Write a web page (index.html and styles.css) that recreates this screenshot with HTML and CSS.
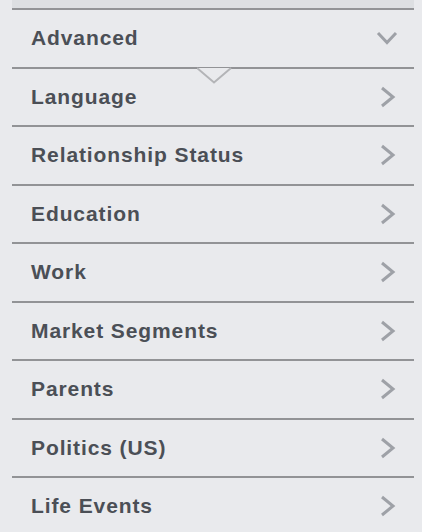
FILE: index.html
```html
<!DOCTYPE html>
<html>
<head>
<meta charset="utf-8">
<link rel="stylesheet" href="styles.css">
</head>
<body>
<div class="panel">
  <div class="topband"></div>
  <div class="row open">
    <span class="label">Advanced</span>
    <svg class="chev-down" width="22" height="16" viewBox="0 0 22 16"><path d="M2 3 L11 12.5 L20 3" fill="none" stroke="#9ea1a7" stroke-width="3"/></svg>
    <svg class="notch" width="36" height="17" viewBox="0 0 36 17"><path d="M0 1 L17 15.5 L34 1" fill="#e9eaed" stroke="#b3b4b7" stroke-width="2"/></svg>
  </div>
  <div class="row"><span class="label">Language</span><svg class="chev" width="18" height="22" viewBox="0 0 18 22"><path d="M3 2 L14 11 L3 20" fill="none" stroke="#9ea1a7" stroke-width="3"/></svg></div>
  <div class="row"><span class="label">Relationship Status</span><svg class="chev" width="18" height="22" viewBox="0 0 18 22"><path d="M3 2 L14 11 L3 20" fill="none" stroke="#9ea1a7" stroke-width="3"/></svg></div>
  <div class="row"><span class="label">Education</span><svg class="chev" width="18" height="22" viewBox="0 0 18 22"><path d="M3 2 L14 11 L3 20" fill="none" stroke="#9ea1a7" stroke-width="3"/></svg></div>
  <div class="row"><span class="label">Work</span><svg class="chev" width="18" height="22" viewBox="0 0 18 22"><path d="M3 2 L14 11 L3 20" fill="none" stroke="#9ea1a7" stroke-width="3"/></svg></div>
  <div class="row"><span class="label">Market Segments</span><svg class="chev" width="18" height="22" viewBox="0 0 18 22"><path d="M3 2 L14 11 L3 20" fill="none" stroke="#9ea1a7" stroke-width="3"/></svg></div>
  <div class="row"><span class="label">Parents</span><svg class="chev" width="18" height="22" viewBox="0 0 18 22"><path d="M3 2 L14 11 L3 20" fill="none" stroke="#9ea1a7" stroke-width="3"/></svg></div>
  <div class="row"><span class="label">Politics (US)</span><svg class="chev" width="18" height="22" viewBox="0 0 18 22"><path d="M3 2 L14 11 L3 20" fill="none" stroke="#9ea1a7" stroke-width="3"/></svg></div>
  <div class="row"><span class="label">Life Events</span><svg class="chev" width="18" height="22" viewBox="0 0 18 22"><path d="M3 2 L14 11 L3 20" fill="none" stroke="#9ea1a7" stroke-width="3"/></svg></div>
</div>
</body>
</html>
```
FILE: styles.css
```css
html, body {
  margin: 0;
  padding: 0;
  background: #e9eaed;
  overflow: hidden;
}
.panel {
  margin-left: 12px;
  width: 402px;
  height: 532px;
}
.topband {
  height: 8px;
  background: #dddfe2;
}
.row {
  position: relative;
  box-sizing: border-box;
  height: 58.5px;
  border-top: 2px solid #929396;
  display: flex;
  align-items: center;
  justify-content: space-between;
  padding: 0 17px 0 19px;
}
.label {
  font-family: "Liberation Sans", Arial, sans-serif;
  font-weight: 700;
  font-size: 21px;
  letter-spacing: 0.9px;
  color: #4b4f56;
}
.chev {
  display: block;
}
.chev-down {
  display: block;
  margin-right: -1px;
}
.notch {
  position: absolute;
  left: 185px;
  bottom: -17px;
  z-index: 2;
}
```
